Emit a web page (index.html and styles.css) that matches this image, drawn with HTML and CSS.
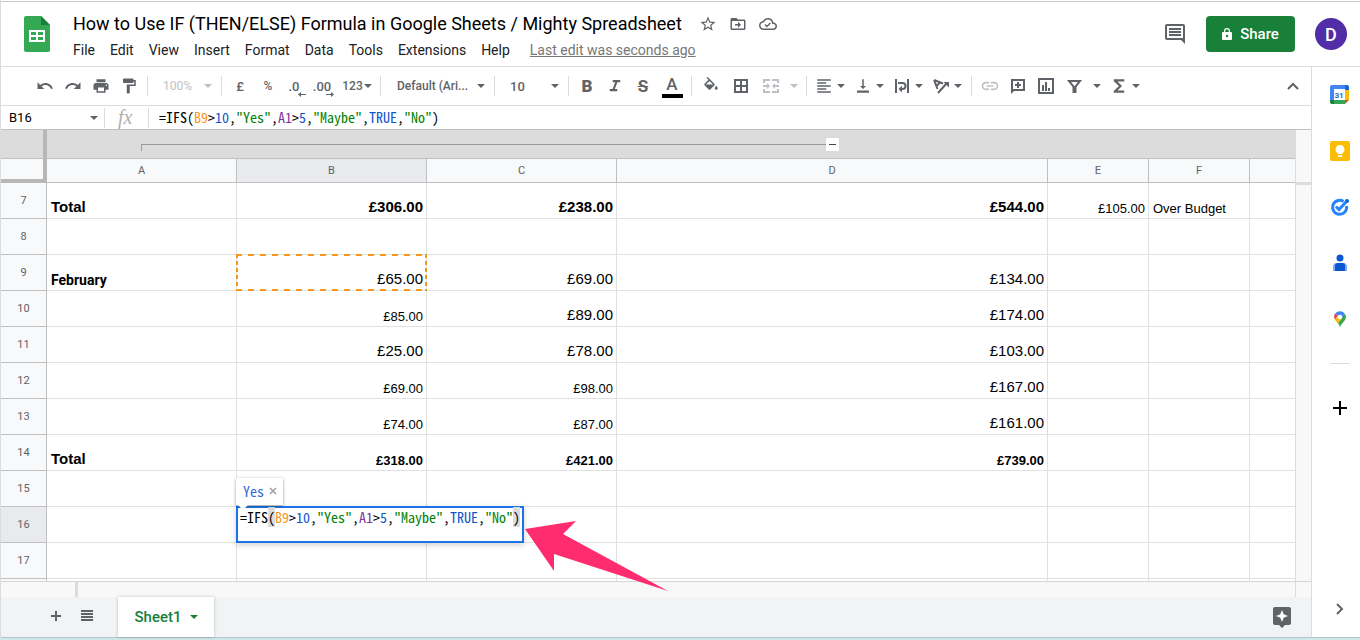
FILE: index.html
```html
<!DOCTYPE html>
<html lang="en">
<head>
<meta charset="utf-8">
<title>How to Use IF (THEN/ELSE) Formula in Google Sheets</title>
<link rel="stylesheet" href="styles.css">
</head>
<body>
<svg class="defs" aria-hidden="true">
  <symbol id="caret" viewBox="0 0 8 4"><path d="M0 0h8L4 4z"/></symbol>
</svg>
<div class="app">
  <header class="header">
    <svg class="logo" viewBox="0 0 26 36"><path fill="#34a853" d="M2 0h15l9 9v25a2 2 0 0 1-2 2H2a2 2 0 0 1-2-2V2a2 2 0 0 1 2-2z"/><path fill="#188038" d="M17 0l9 9h-9z"/><path fill="#fff" fill-rule="evenodd" d="M5 14h16v12H5zM7 16v3h5v-3zm7 0v3h5v-3zM7 21v3h5v-3zm7 0v3h5v-3z"/></svg>
    <div class="heading">
      <div class="title-row">
        <h1 class="title">How to Use IF (THEN/ELSE) Formula in Google Sheets / Mighty Spreadsheet</h1>
        <button class="plain" aria-label="Star"><svg class="i18" viewBox="0 0 24 24"><path d="M22 9.24l-7.19-.62L12 2 9.19 8.63 2 9.24l5.46 4.73L5.82 21 12 17.27 18.18 21l-1.63-7.03L22 9.24zM12 15.4l-3.76 2.27 1-4.28-3.32-2.88 4.38-.38L12 6.1l1.71 4.04 4.38.38-3.32 2.88 1 4.28L12 15.4z"/></svg></button>
        <button class="plain" aria-label="Move"><svg class="i18" viewBox="0 0 24 24"><path d="M20 6h-8l-2-2H4c-1.1 0-2 .9-2 2v12c0 1.1.9 2 2 2h16c1.1 0 2-.9 2-2V8c0-1.100-.9-2-2-2zm0 12H4V8h16v10zm-8-1l4-4-4-4v3H8v2h4z"/></svg></button>
        <button class="plain" aria-label="Saved to Drive"><svg class="i18" viewBox="0 0 24 24"><path d="M19.350 10.040C18.670 6.590 15.640 4 12 4 9.110 4 6.600 5.640 5.350 8.040 2.340 8.360 0 10.910 0 14c0 3.310 2.690 6 6 6h13c2.760 0 5-2.240 5-5 0-2.640-2.050-4.780-4.650-4.960zM19 18H6c-2.210 0-4-1.790-4-4 0-2.050 1.530-3.760 3.560-3.970l1.070-.11.5-.95C8.080 7.140 9.940 6 12 6c2.620 0 4.880 1.860 5.390 4.430l.3 1.5 1.530.11c1.560.1 2.780 1.410 2.780 2.960 0 1.650-1.350 3-3 3zm-8.500-4l-2-2-1.300 1.300 3.300 3.300 5.300-5.300-1.300-1.300z"/></svg></button>
      </div>
      <nav class="menu">
        <button>File</button><button>Edit</button><button>View</button><button>Insert</button><button>Format</button><button>Data</button><button>Tools</button><button>Extensions</button><button>Help</button>
        <a class="last-edit" href="#">Last edit was seconds ago</a>
      </nav>
    </div>
    <button class="plain comments" aria-label="Comments"><svg class="i24" viewBox="0 0 24 24"><path d="M21.990 4c0-1.100-.89-2-1.990-2H4c-1.100 0-2 .9-2 2v12c0 1.100.9 2 2 2h14l4 4-.01-18zM20 4v12H4V4h16zM6 12h12v2H6zm0-3h12v2H6zm0-3h12v2H6z"/></svg></button>
    <button class="share"><svg viewBox="0 0 10 12"><path fill-rule="evenodd" d="M2 4V3a3 3 0 0 1 6 0v1h1a1 1 0 0 1 1 1v6a1 1 0 0 1-1 1H1a1 1 0 0 1-1-1V5a1 1 0 0 1 1-1zm1.200 0h3.600V3a1.800 1.800 0 0 0-3.600 0zM5 6.800a1.200 1.200 0 1 0 0 2.400 1.200 1.200 0 0 0 0-2.400z"/></svg>Share</button>
    <button class="avatar" aria-label="Account">D</button>
  </header>
  <div class="body">
    <main class="workspace">
      <div class="toolbar">
        <button class="tool" aria-label="Undo"><svg class="i18" viewBox="0 0 24 24"><path d="M12.500 8c-2.650 0-5.050.99-6.900 2.600L2 7v9h9l-3.620-3.620c1.390-1.160 3.160-1.880 5.120-1.880 3.540 0 6.550 2.310 7.600 5.500l2.370-.78C21.080 11.030 17.150 8 12.500 8z"/></svg></button>
        <button class="tool" aria-label="Redo"><svg class="i18" viewBox="0 0 24 24"><path d="M18.400 10.600C16.550 8.990 14.150 8 11.500 8c-4.650 0-8.580 3.030-9.960 7.220L3.900 16c1.050-3.190 4.050-5.500 7.600-5.500 1.950 0 3.730.72 5.120 1.880L13 16h9V7l-3.600 3.600z"/></svg></button>
        <button class="tool" aria-label="Print"><svg class="i18" viewBox="0 0 24 24"><path d="M19 8H5c-1.660 0-3 1.340-3 3v6h4v4h12v-4h4v-6c0-1.660-1.340-3-3-3zm-3 11H8v-5h8v5zm3-7c-.55 0-1-.45-1-1s.45-1 1-1 1 .45 1 1-.45 1-1 1zm-1-9H6v4h12V3z"/></svg></button>
        <button class="tool" aria-label="Paint format"><svg class="i18" viewBox="0 0 24 24"><path d="M18 4V3c0-.55-.45-1-1-1H5c-.55 0-1 .45-1 1v4c0 .55.45 1 1 1h12c.55 0 1-.45 1-1V6h1v4H9v11c0 .55.45 1 1 1h2c.55 0 1-.45 1-1v-9h8V4h-3z"/></svg></button>
        <span class="sep"></span>
        <label class="pick zoom off"><select aria-label="Zoom"><option>100%</option></select><svg class="caret"><use href="#caret"/></svg></label>
        <span class="sep"></span>
        <button class="tool">£</button>
        <button class="tool pct">%</button>
        <button class="tool dec" aria-label="Decrease decimal places">.0<svg viewBox="0 0 8 5"><path d="M0 2.500L3 0v2h5v1H3v2z"/></svg></button>
        <button class="tool dec" aria-label="Increase decimal places">.00<svg viewBox="0 0 8 5"><path d="M8 2.500L5 0v2H0v1h5v2z"/></svg></button>
        <button class="formats">123<svg class="caret"><use href="#caret"/></svg></button>
        <span class="sep"></span>
        <label class="pick font"><select aria-label="Font"><option>Default (Ari...</option></select><svg class="caret"><use href="#caret"/></svg></label>
        <span class="sep"></span>
        <label class="pick size"><select aria-label="Font size"><option>10</option></select><svg class="caret"><use href="#caret"/></svg></label>
        <span class="sep"></span>
        <button class="tool bold">B</button>
        <button class="tool" aria-label="Italic"><svg class="i18" viewBox="0 0 24 24"><path d="M9 4v3h3.200l-3.400 9H5v3h10v-3h-3.200l3.400-9H19V4z"/></svg></button>
        <button class="tool strike" aria-label="Strikethrough">S</button>
        <button class="tool wide color"><span>A</span></button>
        <span class="sep"></span>
        <button class="tool wide" aria-label="Fill color"><svg class="i18" viewBox="0 0 24 24"><path d="M16.560 8.940L7.620 0 6.210 1.410l2.380 2.380-5.150 5.150c-.59.59-.59 1.540 0 2.120l5.500 5.500c.29.29.68.44 1.060.44s.77-.15 1.060-.44l5.500-5.500c.59-.58.59-1.530 0-2.120zM5.210 10L10 5.210 14.790 10H5.210zM19 11.500s-2 2.170-2 3.500c0 1.100.9 2 2 2s2-.9 2-2c0-1.330-2-3.500-2-3.500z"/></svg></button>
        <button class="tool wide" aria-label="Borders"><svg class="i18" viewBox="0 0 18 18"><path fill-rule="evenodd" d="M2 2h14v14H2zm2 2v4h4V4zm6 0v4h4V4zM4 10v4h4v-4zm6 0v4h4v-4z"/></svg></button>
        <button class="tool wide off" aria-label="Merge cells"><svg class="i18" viewBox="0 0 18 18"><path d="M1 2h7v2H3v2H1zm9 0h7v4h-2V4h-5zM1 12h2v2h5v2H1zm14 0h2v4h-7v-2h5zM1 8h4V6l3 3-3 3v-2H1zm16 0h-4V6l-3 3 3 3v-2h4z"/></svg></button>
        <button class="tool more off" aria-label="Merge options"><svg class="caret"><use href="#caret"/></svg></button>
        <span class="sep"></span>
        <button class="drop" aria-label="Horizontal align"><svg class="i18" viewBox="0 0 24 24"><path d="M15 15H3v2h12v-2zm0-8H3v2h12V7zM3 13h18v-2H3v2zm0 8h18v-2H3v2zM3 3v2h18V3H3z"/></svg><svg class="caret"><use href="#caret"/></svg></button>
        <button class="drop" aria-label="Vertical align"><svg class="i18" viewBox="0 0 24 24"><path d="M16 12h-3V3h-2v9H8l4 4 4-4zM4 18v3h16v-3H4z"/></svg><svg class="caret"><use href="#caret"/></svg></button>
        <button class="drop" aria-label="Text wrapping"><svg class="i18" viewBox="0 0 18 18"><path d="M2 2h2v14H2zm12 0h2v14h-2z"/><path d="M5 6h4.500a3 3 0 0 1 0 6H9" fill="none" stroke="currentColor" stroke-width="2"/><path d="M9 8.500v7L5.500 12z"/></svg><svg class="caret"><use href="#caret"/></svg></button>
        <button class="drop" aria-label="Text rotation"><svg class="i18" viewBox="0 0 18 18"><path d="M2 3l9 3.500M2 3l3.500 9M8 5.500L4.500 9M6 16L15 6" fill="none" stroke="currentColor" stroke-width="2"/><path d="M11.500 5H17v5.500z"/></svg><svg class="caret"><use href="#caret"/></svg></button>
        <span class="sep"></span>
        <button class="tool off" aria-label="Insert link"><svg class="i20" viewBox="0 0 24 24"><path d="M3.900 12c0-1.710 1.390-3.100 3.100-3.100h4V7H7c-2.760 0-5 2.240-5 5s2.240 5 5 5h4v-1.900H7c-1.710 0-3.100-1.390-3.100-3.100zM8 13h8v-2H8v2zm9-6h-4v1.900h4c1.710 0 3.100 1.390 3.100 3.100s-1.390 3.100-3.100 3.100h-4V17h4c2.760 0 5-2.240 5-5s-2.240-5-5-5z"/></svg></button>
        <button class="tool" aria-label="Insert comment"><svg class="i18" viewBox="0 0 18 18"><path fill-rule="evenodd" d="M2 2h14v12H5l-3 3zm2 2v8h10V4zm4 1h2v2h2v2h-2v2H8V9H6V7h2z"/></svg></button>
        <button class="tool" aria-label="Insert chart"><svg class="i18" viewBox="0 0 18 18"><path fill-rule="evenodd" d="M1 1h16v16H1zm2 2v12h12V3zm2 5h2v6H5zm3-3h2v9H8zm3 6h2v3h-2z"/></svg></button>
        <button class="tool" aria-label="Filter"><svg class="i18" viewBox="0 0 18 18"><path fill="none" stroke="currentColor" stroke-width="2" d="M4 4h11L10.500 9.500V15H8.500V9.500z"/></svg></button>
        <button class="tool filter-more" aria-label="Filter options"><svg class="caret"><use href="#caret"/></svg></button>
        <button class="drop" aria-label="Functions"><svg class="i18" viewBox="0 0 24 24"><path d="M19 3H5v2.500l7 6.500-7 6.500V21h14v-3h-9l6-6-6-6h9V3z"/></svg><svg class="caret"><use href="#caret"/></svg></button>
        <button class="tool collapse" aria-label="Hide the menus"><svg class="i18" viewBox="0 0 18 18"><path fill="none" stroke="currentColor" stroke-width="2" d="M4 12l5-5 5 5"/></svg></button>
      </div>
      <div class="formula-bar">
        <input class="name-box" aria-label="Name box" value="B16">
        <svg class="caret"><use href="#caret"/></svg>
        <span class="fx">fx</span>
        <div class="code" contenteditable="true" spellcheck="false" role="textbox" aria-label="Formula">=IFS(<b class="o">B9</b>&gt;<b class="n">10</b>,<b class="s">"Yes"</b>,<b class="p">A1</b>&gt;<b class="n">5</b>,<b class="s">"Maybe"</b>,<b class="n">TRUE</b>,<b class="s">"No"</b>)</div>
      </div>
      <div class="sheet">
        <div class="grid">
          <div class="groups"><div class="corner-top"></div><div class="bracket"></div><button class="fold" aria-label="Collapse group"></button></div>
          <table class="cells">
            <colgroup><col class="c-num"><col class="c-std"><col class="c-std"><col class="c-std"><col class="c-wide"><col class="c-small"><col class="c-small"><col></colgroup>
            <thead><tr><th class="corner"></th><th>A</th><th class="on">B</th><th>C</th><th>D</th><th>E</th><th>F</th><th></th></tr></thead>
            <tbody>
              <tr><th>7</th><td class="l big"><b>Total</b></td><td class="big"><b>£306.00</b></td><td class="big"><b>£238.00</b></td><td class="big"><b>£544.00</b></td><td>£105.00</td><td class="l">Over Budget</td><td></td></tr>
              <tr><th>8</th><td></td><td></td><td></td><td></td><td></td><td></td><td></td></tr>
              <tr><th>9</th><td class="l month">February</td><td class="big ref">£65.00</td><td class="big">£69.00</td><td class="big">£134.00</td><td></td><td></td><td></td></tr>
              <tr><th>10</th><td></td><td>£85.00</td><td class="big">£89.00</td><td class="big">£174.00</td><td></td><td></td><td></td></tr>
              <tr><th>11</th><td></td><td class="big">£25.00</td><td class="big">£78.00</td><td class="big">£103.00</td><td></td><td></td><td></td></tr>
              <tr><th>12</th><td></td><td>£69.00</td><td>£98.00</td><td class="big">£167.00</td><td></td><td></td><td></td></tr>
              <tr><th>13</th><td></td><td>£74.00</td><td>£87.00</td><td class="big">£161.00</td><td></td><td></td><td></td></tr>
              <tr><th>14</th><td class="l big"><b>Total</b></td><td><b>£318.00</b></td><td><b>£421.00</b></td><td><b>£739.00</b></td><td></td><td></td><td></td></tr>
              <tr><th>15</th><td></td><td></td><td></td><td></td><td></td><td></td><td></td></tr>
              <tr><th class="on">16</th><td></td><td class="active">
                <div class="editor code">=IFS<i>(</i><b class="o">B9</b>&gt;<b class="n">10</b>,<b class="s">"Yes"</b>,<b class="p">A1</b>&gt;<b class="n">5</b>,<b class="s">"Maybe"</b>,<b class="n">TRUE</b>,<b class="s">"No"</b><i>)</i></div>
                <div class="preview code">Yes<button aria-label="Close preview"><svg viewBox="0 0 8 8"><path d="M1 1l6 6M7 1L1 7" fill="none" stroke="#9aa0a6" stroke-width="1.500"/></svg></button></div>
              </td><td></td><td></td><td></td><td></td><td></td></tr>
              <tr><th>17</th><td></td><td></td><td></td><td></td><td></td><td></td><td></td></tr>
              <tr><th></th><td></td><td></td><td></td><td></td><td></td><td></td><td></td></tr>
            </tbody>
          </table>
        </div>
        <div class="vscroll"><div class="vhead"></div></div>
        <svg class="pointer" viewBox="0 0 143 71"><path d="M0 8L51 0 38 13 143 70 29 33V50z"/></svg>
      </div>
      <div class="hscroll"><div class="hhead"></div><div class="hend"></div></div>
      <footer class="tabs">
        <button class="tab-icon" aria-label="Add sheet"><svg class="i18" viewBox="0 0 18 18"><path d="M8 4h2v4h4v2h-4v4H8v-4H4V8h4z"/></svg></button>
        <button class="tab-icon" aria-label="All sheets"><svg class="i18" viewBox="0 0 18 18"><path d="M3 3h12v2H3zm0 3h12v2H3zm0 3h12v2H3zm0 3h12v2H3z"/></svg></button>
        <button class="tab">Sheet1<svg class="caret"><use href="#caret"/></svg></button>
        <button class="plain explore" aria-label="Explore"><svg viewBox="0 0 18 21"><path fill="#5f6368" d="M2 0h14a2 2 0 0 1 2 2v14a2 2 0 0 1-2 2h-4l-3 3-3-3H2a2 2 0 0 1-2-2V2a2 2 0 0 1 2-2z"/><path fill="#fff" d="M9 3l1.700 4.300L15 9l-4.300 1.700L9 15l-1.700-4.300L3 9l4.300-1.700z"/></svg></button>
      </footer>
    </main>
    <aside class="rail">
      <button class="plain" aria-label="Calendar"><svg class="i20" viewBox="0 0 20 20"><path fill="#4285f4" d="M2 0h13v5H5v10H0V2a2 2 0 0 1 2-2z"/><path fill="#1967d2" d="M15 0h2a2 2 0 0 1 2 2v3h-4z"/><path fill="#fbbc04" d="M15 5h4v10h-4z"/><path fill="#34a853" d="M4 15h11v4H4z"/><path fill="#188038" d="M0 15h4v4H2a2 2 0 0 1-2-2z"/><path fill="#ea4335" d="M15 15h4l-4 4z"/><path fill="#fff" d="M4 4h11v11H4z"/><text x="9" y="13" text-anchor="middle" class="cal">31</text></svg></button>
      <button class="plain" aria-label="Keep"><svg class="i20" viewBox="0 0 20 20"><rect width="20" height="20" rx="2" fill="#fbbc04"/><path fill="#fff" d="M10 4a4.500 4.500 0 0 1 2.200 8.400V13H7.800v-.6A4.500 4.500 0 0 1 10 4zM7.800 14.300h4.400V16H7.800z"/></svg></button>
      <button class="plain" aria-label="Tasks"><svg class="i20" viewBox="0 0 20 20"><path fill="none" stroke="#2684fc" stroke-width="3" d="M13.500 4.500A7 7 0 1 0 16.500 9"/><path fill="none" stroke="#2684fc" stroke-width="3" d="M6 9.500l3 3L16 5"/><circle cx="17" cy="4" r="2" fill="#0066da"/></svg></button>
      <button class="plain" aria-label="Contacts"><svg class="i20" viewBox="0 0 20 20"><circle cx="10" cy="5" r="3.500" fill="#0b57d0"/><path fill="#7baaf7" d="M7 10h6a4 4 0 0 1 4 4v4H3v-4a4 4 0 0 1 4-4z"/><path fill="#0b57d0" d="M8 10h5a2 2 0 0 1 2 2v6H5v-5a3 3 0 0 1 3-3z"/></svg></button>
      <button class="plain" aria-label="Maps"><svg class="i20" viewBox="0 0 20 20"><path fill="#34a853" d="M16 8c0 4-4 5-6 10-1-3-2.500-4.600-3.800-6.200L15 5c.6.9 1 1.900 1 3z"/><path fill="#fbbc04" d="M4.600 10L8 8l3.800 2-3.700 4.300C6.900 12.800 5.400 11.600 4.600 10z"/><path fill="#ea4335" d="M5.300 4.400L8 6.500 4.900 10.500C3.700 8.300 3.900 6.100 5.300 4.400z"/><path fill="#4285f4" d="M5.300 4.400A6 6 0 0 1 15 5l-4 4-3-2.500z"/><circle cx="10" cy="8" r="2.300" fill="#fff"/></svg></button>
      <hr>
      <button class="plain add" aria-label="Get add-ons"><svg class="i20" viewBox="0 0 20 20"><path d="M9 3h2v6h6v2h-6v6H9v-6H3V9h6z"/></svg></button>
      <button class="plain hide" aria-label="Hide side panel"><svg class="i18" viewBox="0 0 18 18"><path fill="none" stroke="currentColor" stroke-width="2" d="M6 4l5 5-5 5"/></svg></button>
    </aside>
  </div>
</div>
</body>
</html>
```
FILE: styles.css
```css
* { box-sizing: border-box; }
body { margin: 0; font-family: Roboto, "Liberation Sans", sans-serif; color: #000; background: #fff; }
button, select, input { font: inherit; color: inherit; background: none; border: 0; margin: 0; padding: 0; }
button { cursor: pointer; }
svg { fill: currentColor; flex: none; display: block; }
.defs { display: none; }
.i18 { width: 18px; height: 18px; }
.i20 { width: 20px; height: 20px; }
.i24 { width: 24px; height: 24px; }
.caret { width: 8px; height: 4px; }
.plain { display: flex; align-items: center; justify-content: center; color: #5f6368; }

.app { height: 100vh; display: flex; flex-direction: column; border-left: 1px solid #dadce0; border-bottom: 2px solid #cfe8ec; }
.body { flex: 1; min-height: 0; display: flex; }
.workspace { flex: 1; min-width: 0; display: flex; flex-direction: column; }

.header { display: flex; align-items: center; height: 66px; margin-top: 1px; padding: 0 13px 0 23px; border-top: 1px solid #c8c8c8; border-bottom: 1px solid #dadce0; }
.logo { width: 26px; height: 36px; }
.heading { flex: 1; margin-left: 23px; padding-top: 3px; }
.title-row { display: flex; align-items: center; gap: 12px; }
.title { margin: 0 5px 0 0; font: 400 18px/28px Roboto, sans-serif; white-space: nowrap; }
.menu { display: flex; gap: 15px; font-size: 14px; line-height: 24px; color: #202124; white-space: nowrap; }
.last-edit { margin-left: 5px; color: #777; }
.comments { margin-right: 19px; }
.share { display: flex; align-items: center; justify-content: center; gap: 8px; width: 89px; height: 36px; border-radius: 4px; background: #188038; color: #fff; font-size: 15px; font-weight: 500; }
.share svg { width: 10px; height: 12px; }
.avatar { width: 32px; height: 32px; margin-left: 20px; border-radius: 50%; background: #512da8; color: #fff; font-size: 18px; font-weight: 500; }

.toolbar { display: flex; align-items: center; height: 39px; padding: 0 4px 0 30px; border-bottom: 1px solid #dadce0; color: #5f6368; font-size: 13px; font-weight: 500; }
.tool { flex: none; display: flex; align-items: center; justify-content: center; width: 28px; height: 28px; }
.wide { width: 30px; }
.more { width: 16px; }
.filter-more { width: 18px; }
.off { color: #bdc1c6; }
.sep { flex: none; width: 1px; height: 20px; margin: 0 4px; background: #dadce0; }
.pick { display: grid; flex: none; align-items: center; height: 28px; }
.pick > * { grid-area: 1 / 1; }
.pick select { appearance: none; width: 100%; height: 100%; outline: 0; }
.pick .caret { justify-self: end; margin-right: 5px; pointer-events: none; }
.zoom { width: 65px; }
.zoom select { padding-left: 11px; font-size: 12px; font-weight: 400; }
.font { width: 105px; font-size: 12px; }
.font select { padding-left: 12px; }
.size { width: 65px; }
.size select { padding-left: 11px; }
.formats { flex: none; display: flex; align-items: center; justify-content: center; gap: 1px; width: 38px; height: 28px; font-size: 12px; }
.pct { font-size: 12px; }
.dec { position: relative; padding-right: 4px; }
.dec svg { position: absolute; right: 4px; bottom: 3px; width: 8px; height: 5px; }
.bold { font-size: 17px; font-weight: 900; }
.strike { font-size: 17px; font-weight: 700; text-decoration: line-through; }
.color span { width: 21px; border-bottom: 4px solid #000; font-size: 17px; line-height: 19px; }
.drop { flex: none; display: flex; align-items: center; width: 39px; height: 28px; padding-left: 4px; gap: 4px; }
.collapse { margin-left: auto; }

.formula-bar { display: flex; align-items: center; height: 24px; border-bottom: 1px solid #c0c0c0; font-size: 13px; }
.formula-bar .caret { color: #5f6368; }
.name-box { width: 80px; margin-right: 9px; padding-left: 8px; }
.fx { width: 45px; height: 20px; margin: 0 10px 0 6px; padding-left: 13px; border: solid #dadce0; border-width: 0 1px; color: #b0b0b0; font: italic 20px/18px "Liberation Serif", serif; }
.code { font-family: "Noto Sans Mono CJK SC", "Liberation Mono", monospace; font-size: 14px; line-height: 18px; white-space: pre; outline: 0; }
.formula-bar .code { padding-bottom: 2px; }
.code b, .code i { font-weight: 400; font-style: normal; }
.code i { background: #dadce0; }
.o { color: #f7981d; }
.n { color: #1155cc; }
.s { color: #008000; }
.p { color: #7e3794; }

.sheet { position: relative; flex: 1; min-height: 0; display: flex; }
.grid { flex: 1; min-width: 0; overflow: hidden; }
.groups { display: flex; align-items: flex-start; height: 29px; background: #dcdcdc; border-bottom: 1px solid #c0c0c0; }
.corner-top { width: 46px; height: 29px; border-right: 4px solid #b7b7b7; border-bottom: 1px solid #c0c0c0; }
.bracket { width: 685px; height: 7px; margin: 14px 0 0 94px; border: solid #999; border-width: 1px 0 0 1px; }
.fold { display: flex; align-items: center; justify-content: center; width: 13px; height: 13px; margin-top: 8px; border-radius: 1px; background: #fff; }
.fold::before { content: ""; width: 7px; height: 1px; background: #444; }
.cells { width: 100%; table-layout: fixed; border-collapse: separate; border-spacing: 0; font: 13px/15px "Liberation Sans", Arial, sans-serif; }
.c-num { width: 46px; }
.c-std { width: 190px; }
.c-wide { width: 431px; }
.c-small { width: 101px; }
.cells th { padding: 0; background: #f8f9fa; border: solid #c0c0c0; border-width: 0 1px 1px 0; color: #5f6368; font: 400 11px/14px Roboto, sans-serif; }
.cells thead th { height: 24px; }
.cells .on { background: #e8eaed; }
.cells thead .corner { border-right: 4px solid #b7b7b7; border-bottom: 4px solid #b7b7b7; }
.cells td { height: 36px; padding: 0 3px 2px; border: solid #e1e1e1; border-width: 0 1px 1px 0; text-align: right; vertical-align: bottom; white-space: nowrap; }
.cells tr > :last-child { border-right: 0; }
.cells .l { text-align: left; padding-left: 4px; }
.cells .big { font-size: 15px; line-height: 18px; }
.cells .month { font-family: Roboto, sans-serif; font-weight: 700; font-size: 14px; }
.ref { position: relative; }
.ref::after {
  content: ""; position: absolute; inset: -1px;
  --across: repeating-linear-gradient(90deg, #f7981d 0 6px, transparent 6px 12px);
  --down: repeating-linear-gradient(#f7981d 0 4px, transparent 4px 7px);
  background: var(--across) top / 100% 2px no-repeat, var(--across) bottom / 100% 2px no-repeat, var(--down) left / 2px 100% no-repeat, var(--down) right / 2px 100% no-repeat;
}
.active { position: relative; }
.editor { position: absolute; top: -1px; left: -1px; z-index: 2; width: 288px; height: 37px; padding-left: 2px; border: 2px solid #1a73e8; background: #fff; text-align: left; box-shadow: 0 2px 6px rgba(60, 64, 67, .25); }
.preview { position: absolute; bottom: 37px; left: -1px; z-index: 3; display: flex; align-items: center; gap: 5px; height: 27px; padding: 0 6px 2px 7px; background: #fff; color: #3367d6; box-shadow: 0 1px 3px rgba(0, 0, 0, .4); }
.preview::after { content: ""; position: absolute; top: 100%; left: 2px; border: 5px solid transparent; border-top-color: #fff; border-bottom: 0; }
.preview svg { width: 8px; height: 8px; }
.pointer { position: absolute; top: 391px; left: 524px; z-index: 3; width: 143px; height: 71px; color: #ff2d6f; }
.vscroll { width: 16px; background: #f8f8f8; border-left: 1px solid #dadce0; }
.vhead { height: 55px; border-bottom: 3px solid #dadce0; }
.hscroll { display: flex; justify-content: space-between; height: 16px; background: #f8f8f8; border-top: 1px solid #d5d5d5; }
.hhead { width: 77px; border-right: 3px solid #dadce0; }
.hend { width: 16px; border-left: 1px solid #dadce0; }

.tabs { display: flex; align-items: center; height: 41px; padding-left: 40px; background: #f1f3f4; border-bottom: 1px solid #b5c4c8; color: #5f6368; }
.tab-icon { display: flex; width: 31px; padding: 0 6px 2px; }
.tab { display: flex; align-items: center; justify-content: center; gap: 8px; width: 96px; height: 40px; margin-left: 15px; background: #fff; color: #188038; font-size: 15px; font-weight: 500; box-shadow: 0 0 3px rgba(60, 64, 67, .3); }
.explore { margin: 0 20px 0 auto; }
.explore svg { width: 18px; height: 21px; }

.rail { display: flex; flex-direction: column; align-items: center; gap: 36px; width: 49px; padding: 18px 0 19px 8px; border-left: 1px solid #dadce0; border-bottom: 1px solid #b5c4c8; }
.cal { font: 700 8px Roboto, sans-serif; fill: #1967d2; }
.rail hr { width: 20px; height: 1px; margin: -2px 0; border: 0; background: #dadce0; }
.add { color: #000; }
.hide { margin-top: auto; }
```
